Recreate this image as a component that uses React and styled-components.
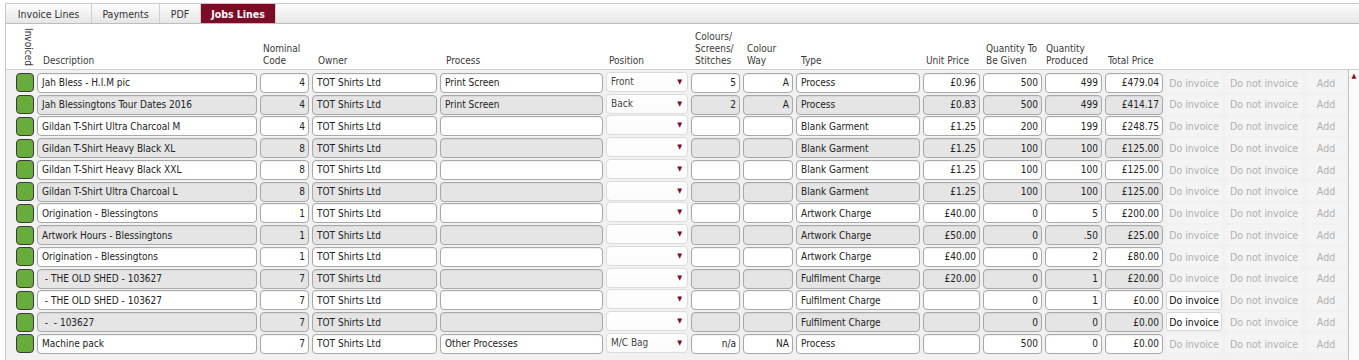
import React from "react";
import styled, { createGlobalStyle } from "styled-components";

const GlobalStyle = createGlobalStyle`
  html, body {
    margin: 0;
    padding: 0;
    background: #ffffff;
    font-family: "DejaVu Sans Condensed", "DejaVu Sans", "Liberation Sans", sans-serif;
    font-stretch: condensed;
    font-size: 10px;
    color: #222;
  }
`;

const COLUMNS = "18px 220px 49px 125px 163px 82px 49px 50px 124px 57px 59px 57px 58px 56px 78px 40px";

const Panel = styled.div`
  margin: 3px 0 0 5px;
  border: 1px solid #c9c9c9;
  border-right: none;
  border-bottom: none;
  height: 357px;
  display: flex;
  flex-direction: column;
  background: #efefef;
`;

const TabBar = styled.div`
  display: flex;
  height: 19px;
  background: linear-gradient(#fdfdfd, #e6e6e6);
  border-bottom: 1px solid #bdbdbd;
`;

const Tab = styled.div`
  display: flex;
  align-items: center;
  justify-content: center;
  padding-top: 1px;
  width: ${(p) => p.$w}px;
  border-right: 1px solid #cfcfcf;
  font-size: 10.5px;
  color: ${(p) => (p.$active ? "#fff" : "#333")};
  font-weight: ${(p) => (p.$active ? "bold" : "normal")};
  background: ${(p) => (p.$active ? "#7b0b26" : "transparent")};
`;

const Header = styled.div`
  display: grid;
  grid-template-columns: ${COLUMNS};
  column-gap: 3px;
  align-items: end;
  height: 46px;
  padding: 0 0 2px 10px;
  box-sizing: border-box;
  background: #fff;
  border-bottom: 1px solid #cdcdcd;
`;

const Label = styled.div`
  padding-left: ${(p) => p.$pad ?? 4}px;
  line-height: 12px;
  color: #3a3a3a;
  white-space: nowrap;
`;

const Vertical = styled.div`
  align-self: start;
  margin-top: 4px;
  writing-mode: vertical-rl;
  line-height: 12px;
  color: #3a3a3a;
  margin-left: 2px;
`;

const Content = styled.div`
  display: flex;
  flex: 1;
  min-height: 0;
`;

const Body = styled.div`
  flex: 1;
  display: grid;
  grid-auto-rows: 21.75px;
  align-content: start;
  padding: 2px 0 0 10px;
  background: #f1f1f1;
`;

const Row = styled.div`
  display: grid;
  grid-template-columns: ${COLUMNS};
  column-gap: 3px;
  align-items: center;
`;

const Check = styled.div`
  height: 19px;
  background: #68ad3b;
  border: 1px solid #3b3b3b;
  border-radius: 4px;
  box-sizing: border-box;
`;

const Field = styled.div`
  height: 20px;
  box-sizing: border-box;
  border: 1px solid #a8a8a8;
  border-radius: 4px;
  background: ${(p) => (p.$shade ? "#e5e5e5" : "#ffffff")};
  box-shadow: inset 0 1px 1px rgba(0, 0, 0, 0.06);
  display: flex;
  align-items: center;
  justify-content: ${(p) => (p.$right ? "flex-end" : "flex-start")};
  padding: 0 3px 0 4px;
  white-space: pre;
  overflow: hidden;
  color: #222;
`;

const Select = styled.div`
  height: 20px;
  box-sizing: border-box;
  border: 1px solid #dcdcdc;
  border-radius: 4px;
  background: linear-gradient(#ffffff, #fbfbfb);
  display: flex;
  align-items: center;
  justify-content: space-between;
  padding: 0 5px 0 4px;
  color: #444;
  margin-top: -2px;
`;

const Arrow = styled.span`
  font-size: 7px;
  color: #7b0b26;
`;

const Action = styled.div`
  height: 19px;
  align-self: start;
  margin-top: 1px;
  box-sizing: border-box;
  display: flex;
  align-items: center;
  justify-content: center;
  border-radius: 3px;
  font-size: 10.5px;
  color: ${(p) => (p.$active ? "#111" : "#b0b0b0")};
  background: ${(p) => (p.$active ? "#ffffff" : "#f4f4f4")};
  border: 1px solid ${(p) => (p.$active ? "#d6d6d6" : "#f4f4f4")};
`;

const Scroll = styled.div`
  width: 10px;
  border-left: 1px solid #c4c4c4;
  background: #fafafa;
  display: flex;
  justify-content: center;
  padding-top: 2px;
`;

const UpArrow = styled.span`
  font-size: 7px;
  line-height: 8px;
  color: #8a0d2a;
`;

const rows = [
  ["Jah Bless - H.I.M pic", "4", "Print Screen", "Front", "5", "A", "Process", "£0.96", "500", "499", "£479.04"],
  ["Jah Blessingtons Tour Dates 2016", "4", "Print Screen", "Back", "2", "A", "Process", "£0.83", "500", "499", "£414.17"],
  ["Gildan T-Shirt Ultra Charcoal M", "4", "", "", "", "", "Blank Garment", "£1.25", "200", "199", "£248.75"],
  ["Gildan T-Shirt Heavy Black XL", "8", "", "", "", "", "Blank Garment", "£1.25", "100", "100", "£125.00"],
  ["Gildan T-Shirt Heavy Black XXL", "8", "", "", "", "", "Blank Garment", "£1.25", "100", "100", "£125.00"],
  ["Gildan T-Shirt Ultra Charcoal L", "8", "", "", "", "", "Blank Garment", "£1.25", "100", "100", "£125.00"],
  ["Origination - Blessingtons", "1", "", "", "", "", "Artwork Charge", "£40.00", "0", "5", "£200.00"],
  ["Artwork Hours - Blessingtons", "1", "", "", "", "", "Artwork Charge", "£50.00", "0", ".50", "£25.00"],
  ["Origination - Blessingtons", "1", "", "", "", "", "Artwork Charge", "£40.00", "0", "2", "£80.00"],
  [" - THE OLD SHED - 103627", "7", "", "", "", "", "Fulfilment Charge", "£20.00", "0", "1", "£20.00"],
  [" - THE OLD SHED - 103627", "7", "", "", "", "", "Fulfilment Charge", "", "0", "1", "£0.00", true],
  [" -  - 103627", "7", "", "", "", "", "Fulfilment Charge", "", "0", "0", "£0.00", true],
  ["Machine pack", "7", "Other Processes", "M/C Bag", "n/a", "NA", "Process", "", "500", "0", "£0.00"],
];

function JobRow({ data, shade }) {
  const [desc, code, process, position, colours, way, type, unit, given, produced, total, active] = data;
  return (
    <Row>
      <Check />
      <Field $shade={shade}>{desc}</Field>
      <Field $shade={shade} $right>{code}</Field>
      <Field $shade={shade}>TOT Shirts Ltd</Field>
      <Field $shade={shade}>{process}</Field>
      <Select>
        <span>{position}</span>
        <Arrow>▼</Arrow>
      </Select>
      <Field $shade={shade} $right>{colours}</Field>
      <Field $shade={shade} $right>{way}</Field>
      <Field $shade={shade}>{type}</Field>
      <Field $shade={shade} $right>{unit}</Field>
      <Field $shade={shade} $right>{given}</Field>
      <Field $shade={shade} $right>{produced}</Field>
      <Field $shade={shade} $right>{total}</Field>
      <Action $active={active}>Do invoice</Action>
      <Action>Do not invoice</Action>
      <Action>Add</Action>
    </Row>
  );
}

export default function App() {
  return (
    <>
      <GlobalStyle />
      <Panel>
        <TabBar>
          <Tab $w={85}>Invoice Lines</Tab>
          <Tab $w={67}>Payments</Tab>
          <Tab $w={40}>PDF</Tab>
          <Tab $w={74} $active>Jobs Lines</Tab>
        </TabBar>
        <Header>
          <Vertical>Invoiced</Vertical>
          <Label $pad={6}>Description</Label>
          <Label $pad={3}>Nominal<br />Code</Label>
          <Label $pad={6}>Owner</Label>
          <Label $pad={6}>Process</Label>
          <Label $pad={3}>Position</Label>
          <Label $pad={4}>Colours/<br />Screens/<br />Stitches</Label>
          <Label $pad={4}>Colour<br />Way</Label>
          <Label $pad={5}>Type</Label>
          <Label $pad={3}>Unit Price</Label>
          <Label $pad={3}>Quantity To<br />Be Given</Label>
          <Label $pad={1}>Quantity<br />Produced</Label>
          <Label $pad={3}>Total Price</Label>
        </Header>
        <Content>
          <Body>
            {rows.map((r, i) => (
              <JobRow key={i} data={r} shade={i % 2 === 1} />
            ))}
          </Body>
          <Scroll>
            <UpArrow>▲</UpArrow>
          </Scroll>
        </Content>
      </Panel>
    </>
  );
}
